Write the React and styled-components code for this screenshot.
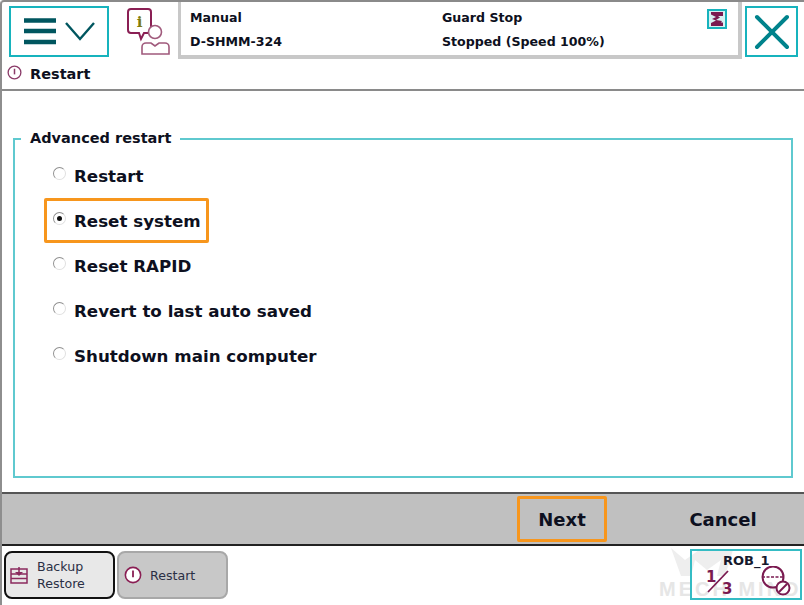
import React from "react";
import styled, { createGlobalStyle } from "styled-components";

const Global = createGlobalStyle`
  html, body { margin: 0; padding: 0; background: #fff; }
  body { width: 804px; height: 605px; overflow: hidden; font-family: "DejaVu Sans", "Noto Sans", sans-serif; }
`;
const Frame = styled.div`
  width: 804px; height: 605px; box-sizing: border-box; display: flex; flex-direction: column;
  border-left: 2px solid #8e8e8e; border-top: 2px solid #8a8a8a;
  border-top-left-radius: 4px; color: #0d1020;
`;
const Header = styled.div`
  height: 57px; display: flex; align-items: flex-start; flex: none;
`;
const MenuButton = styled.div`
  width: 100px; height: 51px; margin: 4px 0 0 7px; box-sizing: border-box; border: 2px solid #17b3bd;
  display: flex; align-items: center; justify-content: center; flex: none; background: #fff;
`;
const InfoIcon = styled.div`
  width: 44px; height: 52px; margin: 6px 0 0 18px; flex: none;
`;
const Status = styled.div`
  width: 564px; height: 57px; margin-left: 7px; box-sizing: border-box; flex: none;
  background: #fff; border-left: 3px solid #c8c8c8; border-right: 4px solid #c8c8c8; border-bottom: 4px solid #c8c8c8;
  display: grid; grid-template-columns: 252px 1fr 31px; grid-template-rows: 24px 24px; padding: 4px 0 0 9px;
  font-size: 12.6px; font-weight: 700; line-height: 24px; align-items: center;
`;
const StopIcon = styled.div`
  width: 20px; height: 20px; box-sizing: border-box; border: 2px solid #17b3bd; justify-self: start; background: #d8f0f2;
  display: flex; align-items: center; justify-content: center; margin-top: 2px;
`;
const CloseButton = styled.div`
  width: 53px; height: 51px; margin: 4px 0 0 3px; box-sizing: border-box; border: 2px solid #17b3bd;
  display: flex; align-items: center; justify-content: center; flex: none;
`;
const TitleBar = styled.div`
  height: 30px; flex: none; display: flex; align-items: center; gap: 8px; padding: 0 0 0 5px;
  border-bottom: 2px solid #8a8a8a; font-size: 14.5px; font-weight: 700; box-sizing: content-box;
  svg { position: relative; top: -2px; }
`;
const Body = styled.div`
  flex: 1; padding: 47px 0 0 11px; display: flex; min-height: 0;
`;
const Group = styled.div`
  width: 780px; height: 340px; box-sizing: border-box; border: 2px solid #5fc9cf; position: relative;
  padding: 23px 0 0 38px; display: flex; flex-direction: column;
`;
const Legend = styled.div`
  position: absolute; top: -12px; left: 6px; padding: 0 9px; background: #fff;
  font-size: 14.5px; font-weight: 700; line-height: 20px;
`;
const Option = styled.div`
  height: 45px; display: flex; align-items: flex-start; font-size: 16.7px; font-weight: 700; line-height: 26px; position: relative; flex: none;
`;
const Radio = styled.span`
  width: 13px; height: 13px; box-sizing: border-box; border-radius: 50%; border: 1.5px solid #909090;
  border-right-color: #e0e0e0; border-bottom-color: #e0e0e0; background: #fff; margin: 4px 8px 0 0; flex: none;
  display: flex; align-items: center; justify-content: center;
`;
const Dot = styled.span`
  width: 5px; height: 5px; border-radius: 50%; background: #111;
`;
const OptionHighlight = styled.div`
  position: absolute; left: -9px; top: -10px; width: 165px; height: 45px; box-sizing: border-box;
  border: 3px solid #f7961d; border-radius: 2px;
`;
const ActionBar = styled.div`
  height: 54px; flex: none; box-sizing: border-box; background: #c0c0c0;
  border-top: 2px solid #555; border-bottom: 2px solid #222; display: flex; align-items: center;
  padding-left: 515px; font-size: 18px; font-weight: 700;
`;
const ActionButton = styled.div`
  width: ${p => p.$w}px; height: 46px; box-sizing: border-box; display: flex; align-items: center; justify-content: center;
  ${p => p.$active ? "border: 3px solid #f7961d; border-radius: 2px;" : ""}
  margin-right: ${p => p.$mr || 0}px;
`;
const TaskBar = styled.div`
  height: 54px; flex: none; display: flex; align-items: flex-start; padding: 5px 0 0 2px; position: relative;
`;
const Task = styled.div`
  width: ${p => p.$w}px; height: 48px; box-sizing: border-box; border-radius: 8px; margin-right: 2px; display: flex; align-items: center;
  font-size: 12.6px; line-height: 17px; color: #2a2f45; padding-left: ${p => p.$pl}px; gap: ${p => p.$gap}px;
  ${p => p.$active
    ? "background: #e8e8e8; border: 2px solid #111;"
    : "background: #c8c8c8; border: 2px solid #a8a8a8;"}
`;
const Watermark = styled.svg`
  position: absolute; left: 655px; top: 0; pointer-events: none;
`;
const RobBox = styled.div`
  position: absolute; left: 688px; top: 3px; width: 112px; height: 51px; box-sizing: border-box; border: 2px solid #35bcc4;
`;
const RobLabel = styled.div`
  position: absolute; left: 31px; top: 0; line-height: 20px; color: #15192c; font-size: 13px; font-weight: 700;
`;
const RobIcon = styled.svg`
  position: absolute; left: 13px; top: 15px;
`;

const Menu = () => (
  <svg width="71" height="30" viewBox="0 0 71 30">
    <path d="M0 3.5h32M0 14h32M0 25h32" stroke="#00565f" strokeWidth="4.6" />
    <path d="M42 6l14 16L70 6" fill="none" stroke="#00565f" strokeWidth="2.4" />
  </svg>
);
const Info = () => (
  <svg width="44" height="48" viewBox="0 0 44 48">
    <path d="M4 1h17a3 3 0 0 1 3 3v18a3 3 0 0 1-3 3h-4l-3 6-2-6H4a3 3 0 0 1-3-3V4a3 3 0 0 1 3-3z" fill="#fff" stroke="#8a1f54" strokeWidth="2" />
    <text x="12.5" y="19" textAnchor="middle" fontFamily="DejaVu Serif, serif" fontWeight="700" fontSize="15" fill="#7c7c10">i</text>
    <circle cx="28" cy="24" r="6.5" fill="#fff" stroke="#a05a7c" strokeWidth="1.6" />
    <path d="M15 46v-7a4 4 0 0 1 4-4h5l4 3 4-3h6a4 4 0 0 1 4 4v7z" fill="#fff" stroke="#a05a7c" strokeWidth="1.6" />
  </svg>
);
const Circle = ({ size = 16, color = "#8a3a68" }) => (
  <svg width={size} height={size} viewBox="0 0 16 16" style={{ flex: "none" }}>
    <circle cx="8" cy="8" r="6.8" fill="#fff" stroke={color} strokeWidth="1.4" />
    <path d="M8 4v6" stroke={color} strokeWidth="1.6" />
  </svg>
);

export default function App() {
  return (
    <>
      <Global />
      <Frame>
        <Header>
          <MenuButton><Menu /></MenuButton>
          <InfoIcon><Info /></InfoIcon>
          <Status>
            <span>Manual</span>
            <span>Guard Stop</span>
            <StopIcon>
              <svg width="16" height="16" viewBox="0 0 16 16">
                <path d="M2 1h12v4H9l2 1.5L7 9l6 1-1 1.5h2V15H2v-3l5-2.5L3 8l4-2L2 3.5z" fill="#7a1a50" />
              </svg>
            </StopIcon>
            <span>D-SHMM-324</span>
            <span>Stopped (Speed 100%)</span>
          </Status>
          <CloseButton>
            <svg width="36" height="36" viewBox="0 0 36 36">
              <path d="M3 3l30 30M33 3L3 33" stroke="#00838c" strokeWidth="4" strokeLinecap="round" />
            </svg>
          </CloseButton>
        </Header>
        <TitleBar>
          <Circle size={15} />
          <span>Restart</span>
        </TitleBar>
        <Body>
          <Group>
            <Legend>Advanced restart</Legend>
            <Option><Radio />Restart</Option>
            <Option>
              <OptionHighlight />
              <Radio><Dot /></Radio>Reset system
            </Option>
            <Option><Radio />Reset RAPID</Option>
            <Option><Radio />Revert to last auto saved</Option>
            <Option><Radio />Shutdown main computer</Option>
          </Group>
        </Body>
        <ActionBar>
          <ActionButton $w={90} $active $mr={56}>Next</ActionButton>
          <ActionButton $w={120}>Cancel</ActionButton>
        </ActionBar>
        <TaskBar>
          <Task $w={111} $active $pl={4} $gap={9}>
            <svg width="18" height="18" viewBox="0 0 18 18" style={{ flex: "none" }}>
              <path d="M1 3h16v14H1zM1 8h16M1 12.5h16M9 1v6" fill="none" stroke="#8a2a5e" strokeWidth="1.5" />
              <path d="M5 6h8l-4 4z" fill="#8a2a5e" />
            </svg>
            <div>Backup<br />Restore</div>
          </Task>
          <Task $w={111} $pl={5} $gap={8}>
            <Circle size={18} color="#8a1f54" />
            <div>Restart</div>
          </Task>
          <Watermark width="147" height="54" viewBox="0 0 147 54">
            <path d="M14 2l14 12 14-10h34l-8 26h-8l4-16-14 10-12-10-4 16H24z" fill="#eeeeee" />
            <text x="2" y="50" fontFamily="Liberation Sans, sans-serif" fontSize="20" fontWeight="700" letterSpacing="3" fill="#e6e6e6">MECH MIND</text>
          </Watermark>
          <RobBox>
            <RobLabel>ROB_1</RobLabel>
            <RobIcon width="90" height="32" viewBox="0 0 90 32">
              <text x="1" y="16" fontFamily="DejaVu Sans, sans-serif" fontWeight="700" fontSize="15" fill="#7a1a50">1</text>
              <path d="M3 26L23 5" stroke="#7a1a50" strokeWidth="1.8" />
              <text x="17" y="28" fontFamily="DejaVu Sans, sans-serif" fontWeight="700" fontSize="15" fill="#7a1a50">3</text>
              <circle cx="68" cy="11" r="10.5" fill="none" stroke="#7a1a50" strokeWidth="2" />
              <path d="M57 11h22" stroke="#7a1a50" strokeWidth="1.6" strokeDasharray="3 1.5" />
              <circle cx="78" cy="22" r="6.5" fill="#fff" stroke="#7a1a50" strokeWidth="2" />
              <path d="M74 26l8-8" stroke="#7a1a50" strokeWidth="2" />
            </RobIcon>
          </RobBox>
        </TaskBar>
      </Frame>
    </>
  );
}
